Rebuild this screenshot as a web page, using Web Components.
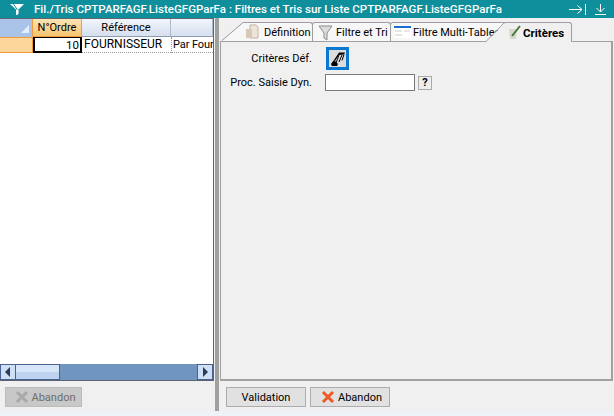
<!DOCTYPE html>
<html>
<head>
<meta charset="utf-8">
<style>
html, body { margin: 0; height: 100%; background: #f0f0f0; overflow: hidden; }
body { font: 11px Roboto, "Liberation Sans", sans-serif; color: #000; }
</style>
</head>
<body>
<filter-window></filter-window>

<script>
const CROSS = (col) => `<svg width="14" height="14" viewBox="0 0 14 14"><path d="M2 2 L12 12 M12 2 L2 12" stroke="${col}" stroke-width="3"/></svg>`;

class AppButton extends HTMLElement{
    constructor(){
        super();
        this.attachShadow({mode: "open"});
        const off = this.hasAttribute("disabled");
        const cross = this.hasAttribute("cross");
        const icon = cross ? CROSS(off ? "#a9a9a9" : "#ee5a24") : "";
        this.shadowRoot.innerHTML = `
        <style>
            :host{
                display: flex;
                align-items: center;
                justify-content: center;
                gap: 3px;
                box-sizing: border-box;
                width: 80px;
                height: 20px;
                padding-left: ${cross ? 3 : 0}px;
                background: ${off ? "#c8c8c8" : "#e1e1e1"};
                border: 1px solid ${off ? "#bcbcbc" : "#adadad"};
                color: ${off ? "#6d6d6d" : "#000"};
            }
            svg{ display: block; }
        </style>
        ${icon}<slot></slot>
        `;
    }
}

class TitleBar extends HTMLElement{
    constructor(){
        super();
        this.attachShadow({mode: "open"});
        this.shadowRoot.innerHTML = `
        <style>
            :host{
                display: flex;
                align-items: center;
                height: 18px;
                background: #0f8e9c;
                color: #fff;
                font: 500 11.55px Roboto, "Liberation Sans", sans-serif;
                padding: 0 8px 0 10px;
            }
            span{ flex: 1; margin-left: 10px; white-space: nowrap; }
            svg{ display: block; }
            .go{ margin-right: 9px; }
        </style>
        <svg width="14" height="12" viewBox="0 0 14 12"><path d="M0 1h14L8.500 6.500V11L6 12.500V6.500z" fill="#fff"/><path d="M3.500 1L7.500 7" stroke="#0f8e9c"/></svg>
        <span><slot></slot></span>
        <svg class="go" width="17" height="11" viewBox="0 0 17 11"><path d="M0 5.500h12.500M8.500 1.500l4.500 4-4.500 4M16.500 0v11" stroke="#fff" fill="none"/></svg>
        <svg width="11" height="11" viewBox="0 0 11 11"><path d="M5.500 0v7.500M1.500 4l4 4 4-4M0 10.500h11" stroke="#fff" fill="none"/></svg>
        `;
    }
}

class DataGrid extends HTMLElement{
    constructor(){
        super();
        this.attachShadow({mode: "open"});
        this.shadowRoot.innerHTML = `
        <style>
            :host{
                display: flex;
                flex-direction: column;
                height: 363px;
                background: #fff;
                border: 1px solid #5d6470;
                border-left: 0;
                box-sizing: border-box;
            }
            .row{ display: grid; grid-template-columns: 33px 49px 89px 42px; white-space: nowrap; overflow: hidden; }
            .head{ height: 18px; }
            .head div{
                display: flex; align-items: center; justify-content: center;
                background: linear-gradient(#f2f5fb, #d5dfee);
                border-right: 1px solid #aeb9cb;
                border-bottom: 1px solid #8f9bb0;
            }
            .head .corner{ background: #a9c4e8; position: relative; border-right: 1px solid #f09a3a; border-bottom-color: #a9c4e8; }
            .corner::after{
                content: ""; position: absolute; right: 3px; bottom: 3px;
                border: 4px solid transparent; border-right-color: #e6eef9; border-bottom-color: #e6eef9;
            }
            .head .on{ background: linear-gradient(#fbe3b5, #f4c572); border-right: 1px solid #f09a3a; border-bottom-color: #f09a3a; }
            .body{ height: 16px; }
            .body div{ line-height: 15px; overflow: hidden; }
            .body .mark{ background: #fcd69a; border-top: 1px solid #f09a3a; border-bottom: 1px solid #f09a3a; border-right: 1px solid #f09a3a; }
            .body .cur{ background: #fff; border: 2px solid #000; border-top-width: 1px; text-align: right; line-height: 14px; padding-right: 1px; box-sizing: border-box; font-size: 11.5px; }
            .body .ref{ border-bottom: 1px dotted #999; padding-left: 2px; font-size: 12px; }
            .body .more{ border-left: 1px dotted #999; border-bottom: 1px dotted #999; padding-left: 1px; letter-spacing: -.1px; }
            .fill{ flex: 1; }
            .bar{ display: flex; height: 16px; background: #7096c0; }
            .btn{ width: 16px; box-sizing: border-box; border: 1px solid #4a6292; background: #cfdff5; display: flex; align-items: center; justify-content: center; }
            .thumb{ width: 44px; box-sizing: border-box; border: 1px solid #4a6292; border-left: 0; background: linear-gradient(#d7e5f8 50%, #bdd3f0 50%); }
            .gap{ flex: 1; }
            svg{ display: block; }
        </style>
        <div class="row head">
            <div class="corner"></div><div class="on">N°Ordre</div><div>Référence</div><div></div>
        </div>
        <div class="row body">
            <div class="mark"></div><div class="cur">10</div><div class="ref">FOURNISSEUR</div><div class="more">Par Four</div>
        </div>
        <div class="fill"></div>
        <div class="bar">
            <div class="btn"><svg width="6" height="10"><path d="M5 0v10L0 5z" fill="#2d3b5a"/></svg></div>
            <div class="thumb"></div>
            <div class="gap"></div>
            <div class="btn"><svg width="6" height="10"><path d="M1 0v10l5-5z" fill="#2d3b5a"/></svg></div>
        </div>
        `;
    }
}

class TabStrip extends HTMLElement{
    constructor(){
        super();
        this.attachShadow({mode: "open"});
        this.shadowRoot.innerHTML = `
        <style>
            :host{ display: flex; height: 19px; padding-left: 2px; align-items: flex-end; position: relative; z-index: 1; }
            .tab{
                display: flex; align-items: center; box-sizing: border-box; height: 19px; flex: none;
                background: #f7f7f7; border: 1px solid #9e9e9e; border-bottom: 0;
                border-radius: 3px 3px 0 0; white-space: nowrap; overflow: hidden; margin-right: -1px;
            }
            .first{ border-left: 0; border-radius: 0 3px 0 0; }
            .active{ font-size: 11.5px; font-weight: bold; height: 20px; margin-bottom: -1px; background: #f0f0f0; border-left: 0; border-radius: 0 3px 0 0; position: relative; z-index: 1; }
            .wing{ display: block; flex: none; height: 19px; position: relative; }
            .over{ margin-left: -19px; height: 20px; margin-bottom: -1px; z-index: 1; }
            svg{ display: block; flex: none; }
            .label{ overflow: hidden; }
        </style>
        <svg class="wing" width="23" height="19" viewBox="0 0 23 19"><path d="M0 19L22 1H23V19z" fill="#f7f7f7"/><path d="M0 18.500L21 .5H23" fill="none" stroke="#9e9e9e"/></svg>
        <div class="tab first" style="width:68px">
            <svg width="16" height="16" viewBox="0 0 16 16" style="margin-right:3px"><path d="M5 1h6l2 2v11H5z" fill="#ede6d8" stroke="#bdb4a4"/><path d="M1 5h6v9H1z" fill="#d6c9b6"/></svg>
            <span class="label">Définition</span>
        </div>
        <div class="tab" style="width:79px;padding-left:5px">
            <svg width="15" height="17" viewBox="0 0 15 17" style="margin-right:3px"><path d="M1 2h13L9 9v7l-3-2V9z" fill="#dcdcdc" stroke="#8c8c8c"/></svg>
            <span class="label">Filtre et Tri</span>
        </div>
        <div class="tab" style="width:116px;padding-left:3px">
            <svg width="17" height="12" viewBox="0 0 17 12" style="margin-right:2px"><rect width="17" height="12" fill="#fff"/><rect width="17" height="2" fill="#1c6fd1"/><path d="M1 5h7M10 5h6M1 9h7" stroke="#ccc"/></svg>
            <span class="label">Filtre Multi-Tables</span>
        </div>
        <svg class="wing over" width="20" height="20" viewBox="0 0 20 20"><path d="M0 20L19 1H20V20z" fill="#f0f0f0"/><path d="M0 19.500L18.500 .5H20" fill="none" stroke="#9e9e9e"/></svg>
        <div class="tab active" style="width:66px;padding-left:2px">
            <svg width="14" height="15" viewBox="0 0 14 15" style="margin-right:1px"><path d="M1 4h8l-1 10H2z" fill="#d9d6cc"/><path d="M4 11L12 1" stroke="#3e7a34" stroke-width="2"/></svg>
            <span class="label">Critères</span>
        </div>
        `;
    }
}

class CriteriaPanel extends HTMLElement{
    constructor(){
        super();
        this.attachShadow({mode: "open"});
        this.shadowRoot.innerHTML = `
        <style>
            :host{
                display: block; flex: 1; box-sizing: border-box;
                border: 1px solid #a0a0a0; border-width: 1px 2px 2px 1px;
                background: #f0f0f0; padding-top: 5px;
            }
            .line{ display: grid; grid-template-columns: 91px auto; column-gap: 13px; align-items: center; }
            .line + .line{ margin-top: 4px; }
            label{ text-align: right; white-space: nowrap; }
            .pick{ box-sizing: border-box; width: 23px; height: 23px; margin-left: 1px; border: 3px solid #0a78d0; background: #ddd; display: flex; align-items: center; justify-content: center; }
            .field{ display: flex; align-items: center; gap: 3px; }
            .input{ box-sizing: border-box; width: 90px; height: 17px; background: #fff; border: 1px solid #7a7a7a; }
            .help{ box-sizing: border-box; width: 14px; height: 14px; border: 1px solid #aaa; background: #eee; font-size: 11px; font-weight: bold; line-height: 12px; text-align: center; }
            svg{ display: block; }
        </style>
        <div class="line">
            <label>Critères Déf.</label>
            <div class="pick">
                <svg width="16" height="16" viewBox="0 0 16 16"><path d="M9 1.500h6l-1 2-5 .5-4 6-1-1z" fill="#000"/><path d="M9 4l-3 8M12 4l-3 7M14 3.500l-2 6" stroke="#000" fill="none"/><path d="M1 13l3-4 4 4-1 2H2z" fill="#000"/></svg>
            </div>
        </div>
        <div class="line">
            <label>Proc. Saisie Dyn.</label>
            <div class="field"><div class="input"></div><div class="help">?</div></div>
        </div>
        `;
    }
}

class FilterWindow extends HTMLElement{
    constructor(){
        super();
        this.attachShadow({mode: "open"});
        this.shadowRoot.innerHTML = `
        <style>
            :host{ display: flex; flex-direction: column; width: 614px; height: 416px; background: #f0f0f0; }
            .main{ display: flex; flex: 1; min-height: 0; }
            .left{ width: 214px; display: flex; flex-direction: column; margin-right: 1px; }
            .split{ width: 4px; background: #a0a0a0; margin-bottom: 1px; }
            .right{ width: 393px; display: flex; flex-direction: column; padding-top: 4px; box-sizing: border-box; margin-left: 1px; }
            .foot{ display: flex; gap: 4px; padding: 6px 0 0 6px; height: 31px; box-sizing: border-box; }
            .leftfoot{ padding: 6px 0 0 5px; height: 31px; box-sizing: border-box; }
            .panel-wrap{ flex: 1; display: flex; flex-direction: column; min-height: 0; }
            .status{ height: 4px; background: #edf3f8; }
        </style>
        <title-bar>Fil./Tris CPTPARFAGF.ListeGFGParFa : Filtres et Tris sur Liste CPTPARFAGF.ListeGFGParFa</title-bar>
        <div class="main">
            <div class="left">
                <data-grid></data-grid>
                <div class="leftfoot"><app-button disabled cross style="width:77px">Abandon</app-button></div>
            </div>
            <div class="split"></div>
            <div class="right">
                <div class="panel-wrap">
                    <tab-strip></tab-strip>
                    <criteria-panel></criteria-panel>
                </div>
                <div class="foot">
                    <app-button>Validation</app-button>
                    <app-button cross>Abandon</app-button>
                </div>
            </div>
        </div>
        <div class="status"></div>
        `;
    }
}

customElements.define("app-button", AppButton);
customElements.define("title-bar", TitleBar);
customElements.define("data-grid", DataGrid);
customElements.define("tab-strip", TabStrip);
customElements.define("criteria-panel", CriteriaPanel);
customElements.define("filter-window", FilterWindow);
</script>
</body>
</html>
